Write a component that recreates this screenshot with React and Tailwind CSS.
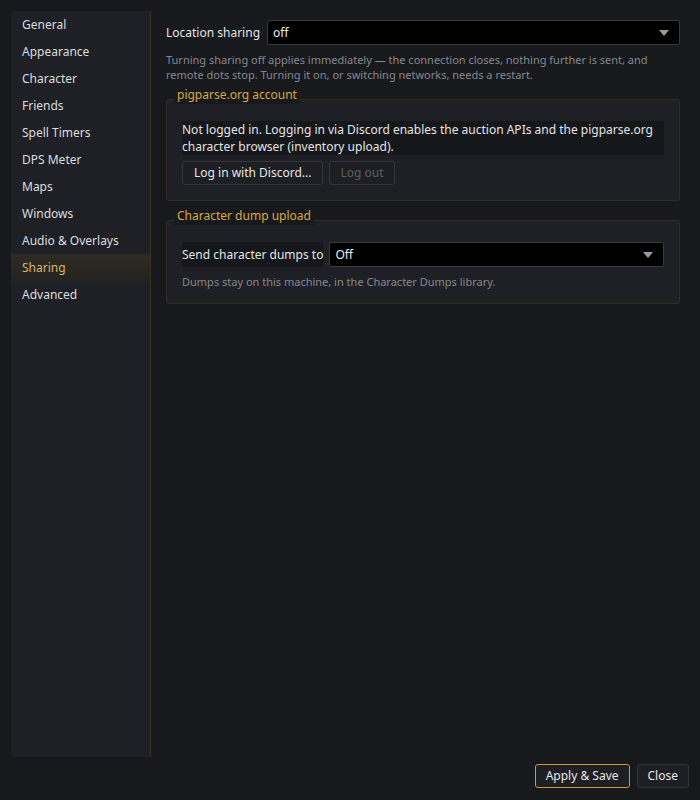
import { useState } from "react"

const NAV = [
  "General",
  "Appearance",
  "Character",
  "Friends",
  "Spell Timers",
  "DPS Meter",
  "Maps",
  "Windows",
  "Audio & Overlays",
  "Sharing",
  "Advanced",
]

const Caret = () => (
  <svg width="10" height="6" viewBox="0 0 10 6" className="shrink-0">
    <path d="M0 0 L10 0 L5 6 Z" fill="#9a9a9e" />
  </svg>
)

const Select = ({ value, className = "" }) => (
  <div
    className={`flex items-center justify-between h-[25px] bg-black border border-[#3a3b40] rounded-[2px] pl-[5px] pr-[10px] text-[#ececec] ${className}`}
  >
    <span>{value}</span>
    <Caret />
  </div>
)

const GroupBox = ({ title, className = "", children }) => (
  <div
    className={`relative border border-[#332d20] rounded-[3px] bg-[#1f2025] px-[15px] pt-[21px] ${className}`}
  >
    <div className="absolute -top-[14px] left-[7px] px-[3px] bg-[#18191d] text-[#d6aa45] leading-[18px]">
      {title}
    </div>
    {children}
  </div>
)

const Button = ({ children, disabled, primary, className = "" }) => (
  <button
    disabled={disabled}
    className={`h-[24px] rounded-[3px] border bg-[#1e1f24] leading-none ${
      primary ? "border-[#c79c3d]" : "border-[#34353a]"
    } ${disabled ? "text-[#5d5e63]" : "text-[#e6e6e6]"} ${className}`}
  >
    {children}
  </button>
)

export default function App() {
  const [active, setActive] = useState("Sharing")

  return (
    <div
      className="w-[700px] h-[800px] bg-[#18191d] flex flex-col text-[12px] text-[#e4e4e4]"
      style={{ fontFamily: '"Noto Sans", "Open Sans", sans-serif' }}
    >
      <div className="flex flex-1 min-h-0 pt-[11px] pl-[11px] pr-[20px]">
        {/* Sidebar */}
        <div className="w-[140px] h-[746px] bg-[#1f2026] border-r border-[#3a311d] rounded-l-[3px] shrink-0">
          {NAV.map(item => (
            <div
              key={item}
              onClick={() => setActive(item)}
              className={`h-[27px] flex items-center pl-[11px] cursor-default ${
                active === item
                  ? "bg-gradient-to-b from-[#2e2b24] to-[#24231f] text-[#d7b46c]"
                  : "text-[#dcdcdc]"
              }`}
            >
              {item}
            </div>
          ))}
        </div>

        {/* Content */}
        <div className="flex-1 ml-[15px] pt-[9px]">
          <div className="flex items-center gap-[7px]">
            <span>Location sharing</span>
            <Select value="off" className="flex-1" />
          </div>
          <p className="mt-[7px] text-[11px] leading-[15px] text-[#86878c]">
            Turning sharing off applies immediately — the connection closes, nothing further is sent, and
            remote dots stop. Turning it on, or switching networks, needs a restart.
          </p>

          <GroupBox title="pigparse.org account" className="mt-[17px] pb-[15px]">
            <div className="bg-[#16171b] leading-[17px]">
              Not logged in. Logging in via Discord enables the auction APIs and the pigparse.org
              character browser (inventory upload).
            </div>
            <div className="flex gap-[6px] mt-[6px]">
              <Button className="px-[11px]">Log in with Discord...</Button>
              <Button disabled className="px-[10px]">Log out</Button>
            </div>
          </GroupBox>

          <GroupBox title="Character dump upload" className="mt-[19px] pb-[14px]">
            <div className="flex items-center gap-[6px]">
              <span className="bg-[#16171b] h-[25px] leading-[25px]">Send character dumps to</span>
              <Select value="Off" className="flex-1" />
            </div>
            <p className="mt-[7px] text-[11px] leading-[15px] text-[#86878c]">
              Dumps stay on this machine, in the Character Dumps library.
            </p>
          </GroupBox>
        </div>
      </div>

      {/* Footer */}
      <div className="flex justify-end gap-[7px] pr-[11px] pb-[12px]">
        <Button primary className="px-[10px]">Apply &amp; Save</Button>
        <Button className="px-[10px]">Close</Button>
      </div>
    </div>
  )
}
